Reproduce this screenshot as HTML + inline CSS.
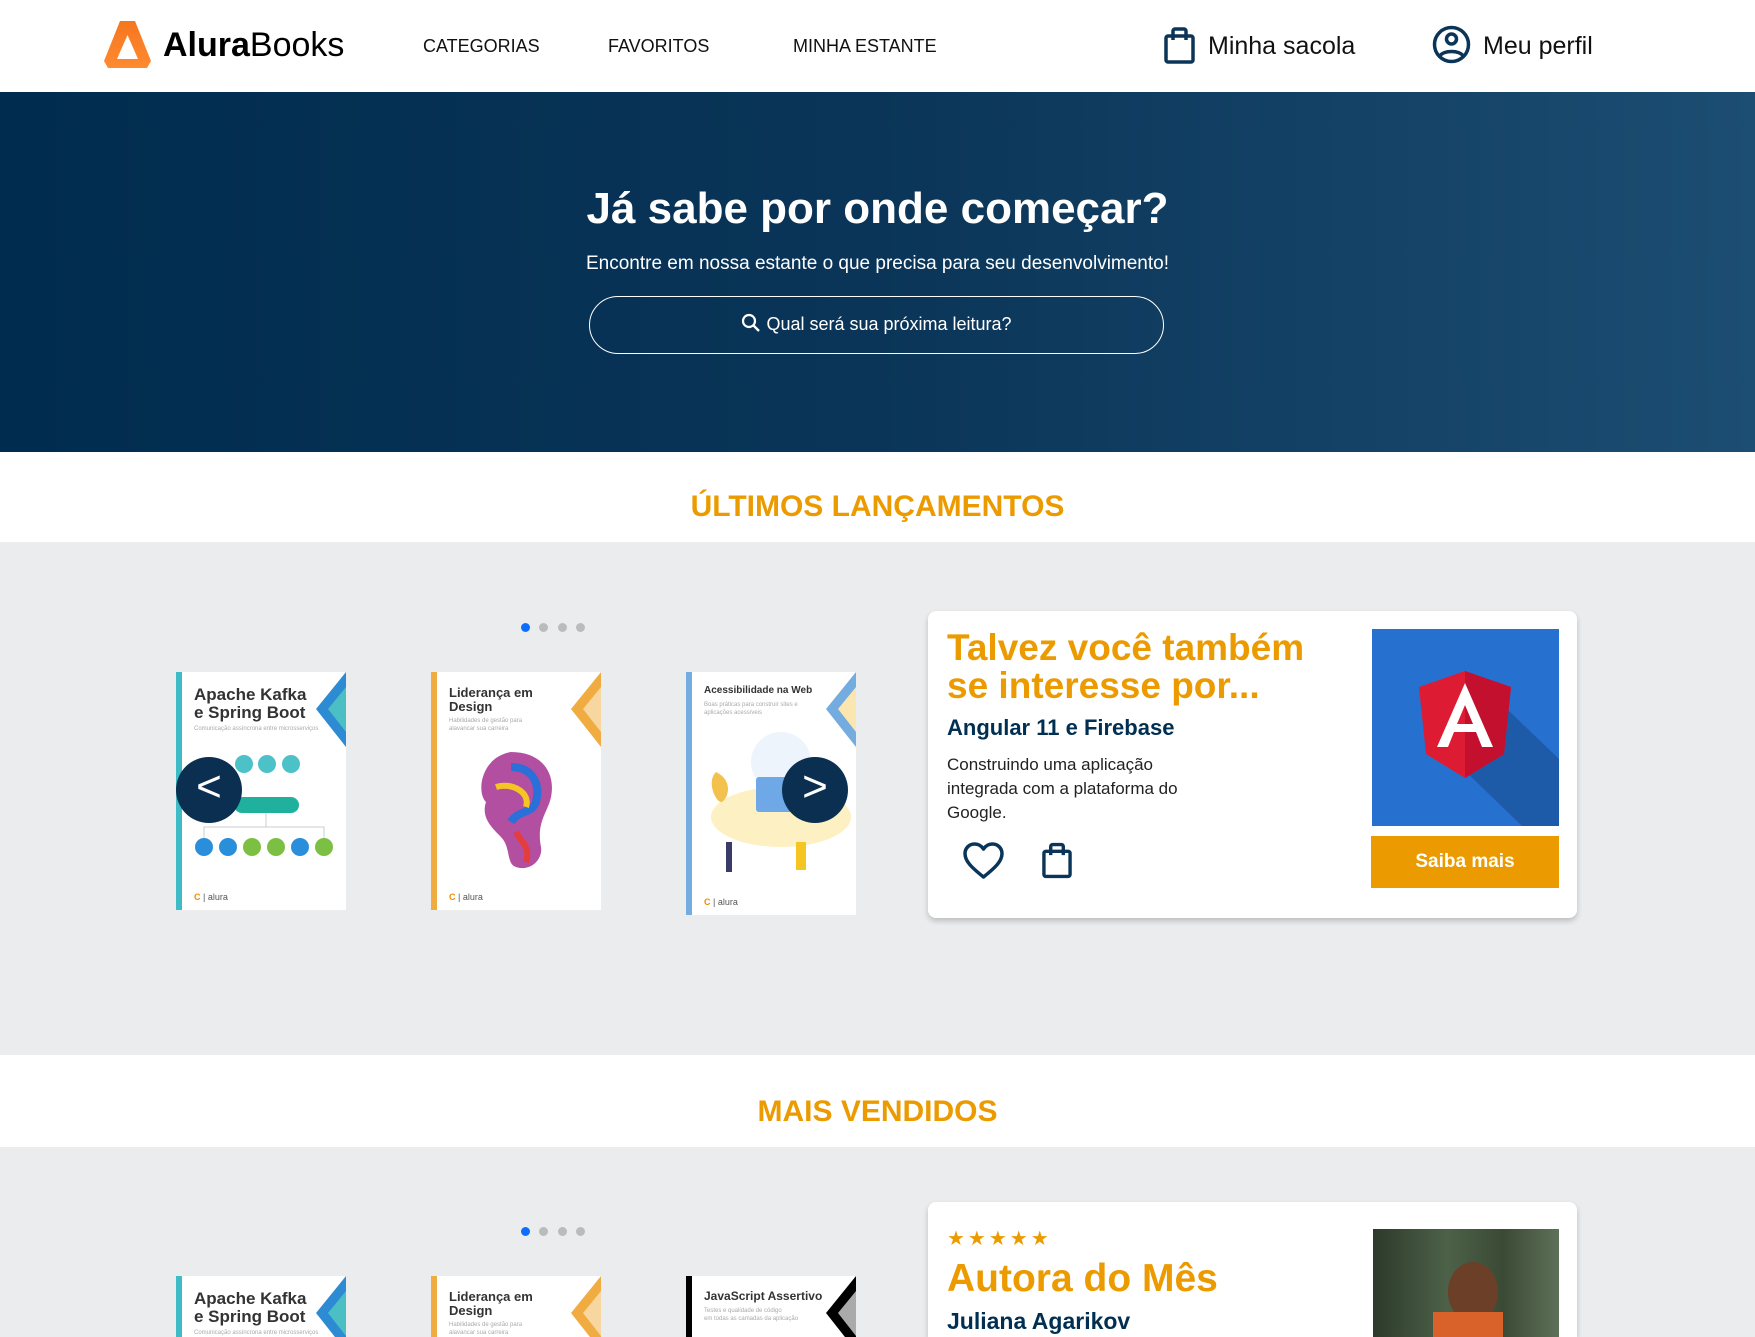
<!DOCTYPE html>
<html style="overflow:hidden;height:1337px"><head><meta charset="utf-8"><style>
*{margin:0;padding:0;box-sizing:border-box}
body{width:1755px;height:1337px;overflow:hidden;background:#fff;font-family:"Liberation Sans",sans-serif;position:relative}
.a{position:absolute}
.nav{font-size:18px;color:#111;top:36px}
.book{position:absolute;background:#fff;overflow:hidden}
.book .s{position:absolute;left:0;top:0;bottom:0;width:6px}
.book .t{position:absolute;left:18px;top:14px;font-weight:bold;color:#333;line-height:1.05}
.book .st{position:absolute;left:18px;color:#aaa;font-size:6px;line-height:1.3}
.dot{position:absolute;width:9px;height:9px;border-radius:50%;background:#bbb}
.arrow{position:absolute;width:66px;height:66px;border-radius:50%;background:#0b2f50;color:#fff;font-size:44px;text-align:center;line-height:60px}
.card{position:absolute;left:928px;width:649px;background:#fff;border-radius:8px;box-shadow:0 3px 6px rgba(0,0,0,.2);overflow:hidden}
</style></head><body>
<svg class="a" style="left:104px;top:21px" width="47" height="47" viewBox="0 0 47 47"><defs><linearGradient id="g" x1="0" y1="0" x2="0" y2="1"><stop offset="0" stop-color="#f5761e"/><stop offset="1" stop-color="#ff8a30"/></linearGradient></defs><path d="M16 0h15l16 40-4 7H4l-4-7zM23.5 14L13 38h21z" fill="url(#g)" fill-rule="evenodd"/></svg>
<div class="a" style="left:163px;top:26px;font-size:34px;color:#000"><b>Alura</b>Books</div>
<div class="a nav" style="left:423px">CATEGORIAS</div>
<div class="a nav" style="left:608px">FAVORITOS</div>
<div class="a nav" style="left:793px">MINHA ESTANTE</div>
<svg class="a" style="left:1164px;top:26px" width="31" height="38" viewBox="0 0 31 38"><rect x="2" y="10" width="27" height="26" rx="2" fill="none" stroke="#0b3558" stroke-width="3.5"/><path d="M9 14V5a2 2 0 0 1 2-2h9a2 2 0 0 1 2 2v9" fill="none" stroke="#0b3558" stroke-width="3.5"/></svg>
<div class="a" style="left:1208px;top:32px;font-size:25px;color:#111">Minha sacola</div>
<svg class="a" style="left:1432px;top:25px" width="39" height="39" viewBox="0 0 39 39"><circle cx="19.5" cy="19.5" r="17" fill="none" stroke="#0b3558" stroke-width="3.5"/><circle cx="19.5" cy="14" r="5" fill="none" stroke="#0b3558" stroke-width="3.5"/><path d="M8 31c3-6 20-6 23 0" fill="none" stroke="#0b3558" stroke-width="3.5"/></svg>
<div class="a" style="left:1483px;top:32px;font-size:25px;color:#111">Meu perfil</div>
<div class="a" style="left:0;top:92px;width:1755px;height:360px;background:linear-gradient(90deg,#002c4f 0%,#0a3558 50%,#1c4d72 100%)"></div>
<div class="a" style="left:0;top:184px;width:1755px;text-align:center;color:#fff;font-size:44px;font-weight:bold">Já sabe por onde começar?</div>
<div class="a" style="left:0;top:253px;width:1755px;text-align:center;color:#fff;font-size:19px">Encontre em nossa estante o que precisa para seu desenvolvimento!</div>
<div class="a" style="left:589px;top:296px;width:575px;height:58px;border:1.5px solid #fff;border-radius:29px;color:#fff;font-size:18px;text-align:center;line-height:55px"><svg width="20" height="20" viewBox="0 0 20 20" style="vertical-align:-3px"><circle cx="8" cy="8" r="6" fill="none" stroke="#fff" stroke-width="2.2"/><path d="M12.5 12.5L18 18" stroke="#fff" stroke-width="2.4"/></svg> Qual será sua próxima leitura?</div>
<div class="a" style="left:0;top:490px;width:1755px;text-align:center;color:#eb9b00;font-size:30px;font-weight:bold">ÚLTIMOS LANÇAMENTOS</div>
<div class="a" style="left:0;top:542px;width:1755px;height:513px;background:#ebecee"></div>
<div class="dot" style="left:521px;top:623px;background:#0d6efd"></div><div class="dot" style="left:539px;top:623px"></div><div class="dot" style="left:558px;top:623px"></div><div class="dot" style="left:576px;top:623px"></div>

<div class="book" style="left:176px;top:672px;width:170px;height:238px"><div class="s" style="background:#3ebbc4"></div><div class="t" style="font-size:17px">Apache Kafka<br>e Spring Boot</div><div class="st" style="top:54px">Comunicação assíncrona entre microsserviços</div>
<svg class="a" style="right:0;top:0" width="30" height="75"><path d="M30 0V75L0 37z" fill="#2d8bd3"/><path d="M30 15V60L12 37z" fill="#4bbfc3"/></svg>
<svg class="a" style="left:18px;top:80px" width="140" height="110"><g fill="#4cc2c8"><circle cx="50" cy="12" r="9"/><circle cx="73" cy="12" r="9"/><circle cx="97" cy="12" r="9"/></g><rect x="40" y="45" width="65" height="16" rx="8" fill="#1fb19e"/><g fill="#2a8fdb"><circle cx="10" cy="95" r="9"/><circle cx="34" cy="95" r="9"/><circle cx="106" cy="95" r="9"/></g><g fill="#7cc043"><circle cx="58" cy="95" r="9"/><circle cx="82" cy="95" r="9"/><circle cx="130" cy="95" r="9"/></g><path d="M10 86V75h120v11M72 61v14" stroke="#ccc" fill="none"/></svg>
<div class="a" style="left:18px;bottom:8px;font-size:9px;color:#555"><span style="color:#f28b00;font-weight:bold">C</span> | alura</div></div>

<div class="book" style="left:431px;top:672px;width:170px;height:238px"><div class="s" style="background:#f0ac41"></div><div class="t" style="font-size:13px">Liderança em<br>Design</div><div class="st" style="top:46px">Habilidades de gestão para<br>alavancar sua carreira</div>
<svg class="a" style="right:0;top:0" width="30" height="75"><path d="M30 0V75L0 37z" fill="#f0ac41"/><path d="M30 15V60L12 37z" fill="#f8d6a0"/></svg>
<svg class="a" style="left:40px;top:75px" width="90" height="130"><path d="M40 5c30 0 45 20 40 45-3 15-15 25-10 50 2 12-10 25-25 20-10-3-5-20-15-30C20 80 10 70 15 55 5 45 10 10 40 5z" fill="#b34fa0"/><path d="M40 20c20 0 30 15 25 35-4 12-18 8-25 20" stroke="#2b6fd8" stroke-width="8" fill="none"/><path d="M25 40c15-5 35 5 30 20" stroke="#f5c623" stroke-width="6" fill="none"/><path d="M45 85c5 10 15 15 10 30" stroke="#e63c3c" stroke-width="6" fill="none"/></svg>
<div class="a" style="left:18px;bottom:8px;font-size:9px;color:#555"><span style="color:#f28b00;font-weight:bold">C</span> | alura</div></div>

<div class="book" style="left:686px;top:672px;width:170px;height:243px"><div class="s" style="background:#74acdf"></div><div class="t" style="font-size:10px">Acessibilidade na Web</div><div class="st" style="top:30px">Boas práticas para construir sites e<br>aplicações acessíveis</div>
<svg class="a" style="right:0;top:0" width="30" height="75"><path d="M30 0V75L0 37z" fill="#74acdf"/><path d="M30 15V60L12 37z" fill="#fbe6b0"/></svg>
<svg class="a" style="left:15px;top:60px" width="150" height="150"><ellipse cx="80" cy="85" rx="70" ry="30" fill="#fdf0c2"/><circle cx="80" cy="30" r="30" fill="#eef4fb"/><rect x="55" y="45" width="50" height="35" rx="3" fill="#6fa8e6"/><path d="M15 40c-10 10 0 30 5 30s15-20-5-30z" fill="#f2c14e"/><rect x="25" y="110" width="6" height="30" fill="#3b3b6b"/><rect x="95" y="110" width="10" height="28" fill="#f5c623"/></svg>
<div class="a" style="left:18px;bottom:8px;font-size:9px;color:#555"><span style="color:#f28b00;font-weight:bold">C</span> | alura</div></div>

<div class="arrow" style="left:176px;top:757px">&lt;</div>
<div class="arrow" style="left:782px;top:757px">&gt;</div>

<div class="card" style="top:611px;height:307px">
<div class="a" style="left:19px;top:18px;font-size:37px;font-weight:bold;color:#eb9b00;line-height:38px">Talvez você também<br>se interesse por...</div>
<div class="a" style="left:19px;top:104px;font-size:22px;font-weight:bold;color:#002f52">Angular 11 e Firebase</div>
<div class="a" style="left:19px;top:142px;font-size:17px;color:#222;line-height:24px">Construindo uma aplicação<br>integrada com a plataforma do<br>Google.</div>
<svg class="a" style="left:35px;top:231px" width="41" height="38" viewBox="0 0 41 38"><path d="M20.5 35C8 25 2 19 2 11.5 2 6 6.5 2 11.5 2c4 0 7 2 9 5 2-3 5-5 9-5C34.5 2 39 6 39 11.5 39 19 33 25 20.5 35z" fill="none" stroke="#0b3558" stroke-width="3.5" stroke-linejoin="round"/></svg>
<svg class="a" style="left:114px;top:230px" width="30" height="38" viewBox="0 0 31 38"><rect x="2" y="10" width="27" height="26" rx="2" fill="none" stroke="#0b3558" stroke-width="3.5"/><path d="M9 14V5a2 2 0 0 1 2-2h9a2 2 0 0 1 2 2v9" fill="none" stroke="#0b3558" stroke-width="3.5"/></svg>
<svg class="a" style="left:444px;top:18px" width="187" height="197" viewBox="0 0 187 197"><rect width="187" height="197" fill="#2671d0"/><path d="M112 58L187 130V197H150L60 110z" fill="#1d5aa8"/><path d="M93 42L47 58l7 67 39 24 39-24 7-67z" fill="#dd1b33"/><path d="M93 42v107l39-24 7-67z" fill="#c3102f"/><path d="M93 54L65 118h11l6-15h22l6 15h11zm0 22l8 19H85z" fill="#fff" fill-rule="evenodd"/></svg>
<div class="a" style="left:443px;top:225px;width:188px;height:52px;background:#eb9b00;color:#fff;font-weight:bold;font-size:19px;text-align:center;line-height:52px">Saiba mais</div>
</div>
<div class="a" style="left:0;top:1095px;width:1755px;text-align:center;color:#eb9b00;font-size:30px;font-weight:bold">MAIS VENDIDOS</div>
<div class="a" style="left:0;top:1147px;width:1755px;height:190px;background:#ebecee"></div>
<div class="dot" style="left:521px;top:1227px;background:#0d6efd"></div><div class="dot" style="left:539px;top:1227px"></div><div class="dot" style="left:558px;top:1227px"></div><div class="dot" style="left:576px;top:1227px"></div>
<div class="book" style="left:176px;top:1276px;width:170px;height:61px"><div class="s" style="background:#3ebbc4"></div><div class="t" style="font-size:17px">Apache Kafka<br>e Spring Boot</div><div class="st" style="top:54px">Comunicação assíncrona entre microsserviços</div><svg class="a" style="right:0;top:0" width="30" height="75"><path d="M30 0V75L0 37z" fill="#2d8bd3"/><path d="M30 15V60L12 37z" fill="#4bbfc3"/></svg></div>
<div class="book" style="left:431px;top:1276px;width:170px;height:61px"><div class="s" style="background:#f0ac41"></div><div class="t" style="font-size:13px">Liderança em<br>Design</div><div class="st" style="top:46px">Habilidades de gestão para<br>alavancar sua carreira</div><svg class="a" style="right:0;top:0" width="30" height="75"><path d="M30 0V75L0 37z" fill="#f0ac41"/><path d="M30 15V60L12 37z" fill="#f8d6a0"/></svg></div>
<div class="book" style="left:686px;top:1276px;width:170px;height:61px"><div class="s" style="background:#000"></div><div class="t" style="font-size:12px">JavaScript Assertivo</div><div class="st" style="top:32px">Testes e qualidade de código<br>em todas as camadas da aplicação</div><svg class="a" style="right:0;top:0" width="30" height="75"><path d="M30 0V75L0 37z" fill="#000"/><path d="M30 15V60L12 37z" fill="#aaa"/></svg></div>
<div class="card" style="top:1202px;height:135px;border-radius:8px 8px 0 0">
<div class="a" style="left:19px;top:24px;font-size:20px;color:#eb9b00;letter-spacing:3px">★★★★★</div>
<div class="a" style="left:19px;top:55px;font-size:39px;font-weight:bold;color:#eb9b00">Autora do Mês</div>
<div class="a" style="left:19px;top:106px;font-size:23px;font-weight:bold;color:#002f52">Juliana Agarikov</div>
<div class="a" style="left:445px;top:27px;width:186px;height:108px;background:linear-gradient(90deg,#2c3a2a,#4d6148 40%,#3a4a35 70%,#5f7058);overflow:hidden"><div class="a" style="left:75px;top:33px;width:50px;height:60px;border-radius:50%;background:#6b3f28"></div><div class="a" style="left:60px;top:83px;width:70px;height:40px;background:#d9622b"></div></div>
</div>
</body></html>
